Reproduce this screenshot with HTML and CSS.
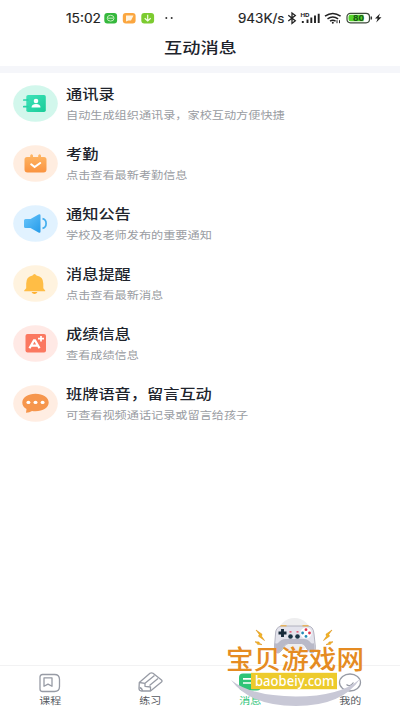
FILE: index.html
```html
<!DOCTYPE html>
<html lang="zh-CN">
<head>
<meta charset="utf-8">
<title>互动消息</title>
<link rel="stylesheet" href="styles.css">
</head>
<body>
<div class="app">
  <header class="status">
    <svg width="400" height="36" viewBox="0 0 400 36">
      <text class="status-text" x="66" y="22.5" textLength="35" lengthAdjust="spacingAndGlyphs">15:02</text>
      <rect x="104.300" y="13" width="12.800" height="10.500" rx="3" fill="#35b83d"/>
      <ellipse cx="110.600" cy="18.200" rx="3.400" ry="2.900" fill="none" stroke="#c5f0bd"/>
      <path d="M108 18.200h5.200" stroke="#c5f0bd"/>
      <rect x="122.800" y="13" width="12.800" height="10.500" rx="3" fill="#fba63f"/>
      <path d="M126 15.500h7.500l-2.500 5h-2.500l-2.500 1z" fill="#fff3df"/>
      <rect x="141.300" y="13" width="12.800" height="10.500" rx="3" fill="#7ccb30"/>
      <path d="M147.700 14.800v6M144.700 18.300l3 2.700 3-2.700" fill="none" stroke="#f2ffe5" stroke-width="1.200"/>
      <circle cx="166.300" cy="18" r="1" fill="#333"/><circle cx="171.700" cy="18" r="1" fill="#333"/>
      <text class="status-text" x="238" y="22.500" textLength="46.500" lengthAdjust="spacingAndGlyphs">943K/s</text>
      <path d="M288.300 15.300l7 5.500-3.300 2.600v-10.400l3.300 2.600-7 5.300" fill="none" stroke="#222" stroke-width="1.300"/>
      <text class="hd" x="300.500" y="17" textLength="9" lengthAdjust="spacingAndGlyphs">HD</text>
      <path d="M302.800 21v2M307.500 19.500v3.500M311.300 17.500v5.500M315 15.500v7.500M318.700 13.800v9.200" stroke="#222" stroke-width="1.900"/>
      <g fill="none" stroke="#222" stroke-width="1.500">
        <path d="M325 16.200q7.800-5.500 15.600 0M327.500 18.800q5.300-3.500 10.600 0M330 21.200q2.800-1.800 5.600 0"/>
      </g>
      <circle cx="332.800" cy="22.700" r="1" fill="#222"/>
      <path d="M337 20.200v3M339.500 20.200v3" stroke="#222"/>
      <rect x="347" y="13.300" width="22.500" height="9.500" rx="3.500" fill="#fff" stroke="#3d4a3b" stroke-width="1.200"/>
      <path d="M350.500 14.800h13v6.500h-13q-2 0-2-2v-2.500q0-2 2-2z" fill="#55d42a"/>
      <text class="charge" x="353" y="21.100" textLength="11" lengthAdjust="spacingAndGlyphs">80</text>
      <path d="M371.300 16.500v3" stroke="#333" stroke-width="1.500"/>
      <path d="M380 13.500l-5 5h2.700l-1.500 4 5.300-5.200h-2.800z" fill="#222"/>
    </svg>
  </header>
  <h1 class="title"><span class="wide">互动消息</span></h1>
  <div class="band"></div>

  <main class="list">
    <div class="row">
      <svg class="icon" viewBox="0 0 45 37">
        <defs>
          <linearGradient id="g1" x2="1" y2="1"><stop stop-color="#40e3ba"/><stop offset="1" stop-color="#19cc98"/></linearGradient>
          <linearGradient id="g2" x2="0" y2="1"><stop stop-color="#ffb765"/><stop offset="1" stop-color="#fa9340"/></linearGradient>
          <linearGradient id="g3" x2="1" y2="1"><stop stop-color="#69c5fb"/><stop offset="1" stop-color="#259be9"/></linearGradient>
        </defs>
        <ellipse cx="22.500" cy="18.500" rx="22.300" ry="18.300" fill="#d2f7ec"/>
        <rect x="13.300" y="10" width="19.500" height="17" rx="1.800" fill="url(#g1)"/>
        <path d="M10.800 15h4M10.800 21.700h4" stroke="#27d3a6" stroke-width="1.700" stroke-linecap="round"/>
        <circle cx="23" cy="16" r="2.300" fill="#fff"/>
        <path d="M18.500 22.600q0-3.500 4.500-3.500t4.500 3.500z" fill="#fff"/>
      </svg>
      <div class="copy"><div class="name wide">通讯录</div><div class="desc wide">自动生成组织通讯录，家校互动方便快捷</div></div>
    </div>
    <div class="row">
      <svg class="icon" viewBox="0 0 45 37">
        <ellipse cx="22.500" cy="18.500" rx="22.300" ry="18.300" fill="#ffede0"/>
        <path d="M14 12h3.200v-1.500q1.400-2.300 2.800 0v1.500h5.200v-1.500q1.400-2.300 2.800 0v1.500h3q2.500 0 2.500 2.500v10q0 3-3 3h-16q-3 0-3-3v-10q0-2.500 2.500-2.500z" fill="url(#g2)"/>
        <path d="M18.200 19.300l3.400 2.700 5.600-4" fill="none" stroke="#fff" stroke-width="2.100" stroke-linecap="round"/>
      </svg>
      <div class="copy"><div class="name wide">考勤</div><div class="desc wide">点击查看最新考勤信息</div></div>
    </div>
    <div class="row">
      <svg class="icon" viewBox="0 0 45 37">
        <ellipse cx="22.500" cy="18.500" rx="22.300" ry="18.300" fill="#e1f2ff"/>
        <path d="M12.500 14h5l8-4.500q2-1 2 1v16q0 2-2 1l-8-4.500h-5q-1.500 0-1.500-1.500v-6q0-1.500 1.500-1.500z" fill="url(#g3)"/>
        <path d="M29.500 13.700q3.600.8 3.600 4.800t-3.600 4.800" fill="none" stroke="#43aeee" stroke-width="1.700"/>
      </svg>
      <div class="copy"><div class="name wide">通知公告</div><div class="desc wide">学校及老师发布的重要通知</div></div>
    </div>
    <div class="row">
      <svg class="icon" viewBox="0 0 45 37">
        <ellipse cx="22.500" cy="18.500" rx="22.300" ry="18.300" fill="#fff3df"/>
        <path d="M19.500 10.500q2-3.200 4 0q6.800 1 6.800 8v4.800l1.900 2.200v.8h-21v-.8l2-2.200v-4.800q0-7 6.300-8z" fill="#ffbd45"/>
        <path d="M18.500 27h6q-1.200 1.900-3 1.900t-3-1.900z" fill="#ffb02f"/>
      </svg>
      <div class="copy"><div class="name wide">消息提醒</div><div class="desc wide">点击查看最新消息</div></div>
    </div>
    <div class="row">
      <svg class="icon" viewBox="0 0 45 37">
        <ellipse cx="22.500" cy="18.500" rx="22.300" ry="18.300" fill="#ffe9e5"/>
        <rect x="12.500" y="9" width="20.500" height="18.500" rx="2" fill="#fb7860"/>
        <path d="M16.500 23.300l4.500-8h1l4.500 8M18.500 20.700h6" fill="none" stroke="#fff" stroke-width="2.300"/>
        <path d="M28 11v5.400M25 13.700h6" stroke="#fff" stroke-width="1.700"/>
      </svg>
      <div class="copy"><div class="name wide">成绩信息</div><div class="desc wide">查看成绩信息</div></div>
    </div>
    <div class="row">
      <svg class="icon" viewBox="0 0 45 37">
        <ellipse cx="22.500" cy="18.500" rx="22.300" ry="18.300" fill="#ffede2"/>
        <path d="M22.500 8.800c7.600 0 13.200 3.700 13.200 8.800s-5.600 8.700-13.200 8.700q-2 0-3.500-.3-2.500 1.800-6 1.700l.5-3.600q-4.200-2.400-4.200-6.500c0-5.100 5.600-8.800 13.200-8.800z" fill="#f6964d"/>
        <g fill="#fff"><ellipse cx="15.400" cy="17.400" rx="2" ry="1.700"/><ellipse cx="22.500" cy="17.400" rx="2" ry="1.700"/><ellipse cx="29.600" cy="17.400" rx="2" ry="1.700"/></g>
      </svg>
      <div class="copy"><div class="name wide">班牌语音，留言互动</div><div class="desc wide">可查看视频通话记录或留言给孩子</div></div>
    </div>
  </main>

  <nav class="tabs">
    <div class="tab">
      <svg class="tab-icon" viewBox="0 0 26 22">
        <path d="M5.500 2.500h12q5 0 5 5v7q0 5-5 5h-12q-2.500 0-2.500-2.500v-12q0-2.500 2.500-2.500z"/>
        <path d="M7 5.800h8v8.500l-4-2.200-4 2.200z"/>
      </svg>
      <span class="wide">课程</span>
    </div>
    <div class="tab">
      <svg class="tab-icon" viewBox="0 0 26 22">
        <path d="M2.300 10.500L13 1.300q1.500-1 3 0L24.500 8q1 1 0 2L13.500 19H4.500q-2.500 0-2.500-2.500z"/>
        <path d="M2.300 10.500L8 11.300v3l5.500.7V19M8 11.300L17.500 3.500M12.500 13.500L21 6.500M2.500 15.500q2.500.5 3 3.500"/>
      </svg>
      <span class="wide">练习</span>
    </div>
    <div class="tab tab-active">
      <svg class="tab-icon" viewBox="0 0 26 22">
        <rect class="solid" x="2" y="1.500" width="22" height="17" rx="4"/>
        <path class="lines" d="M6 6.800h12M6 11h9"/>
      </svg>
      <span class="wide">消息</span>
    </div>
    <div class="tab">
      <svg class="tab-icon" viewBox="0 0 26 22">
        <ellipse cx="13" cy="10.500" rx="10.500" ry="8.500"/>
        <path d="M9.500 12.500q3.500 3 7-2"/>
      </svg>
      <span class="wide">我的</span>
    </div>
  </nav>

  <svg class="mark" viewBox="220 610 150 101">
    <circle cx="294.500" cy="635" r="17" fill="#eeeeef"/>
    <path d="M275.500 634q0-7 6-8h26q6 0 6.500 8l1.300 12q.5 7-3.300 7-3 0-6.500-7-1.500-2.500-4-2.500h-13q-2.500 0-4 2.500-4 7-6.500 7-3.800 0-3.500-7z" fill="#e3e3ec" stroke="#a4a4b4" stroke-width=".8"/>
    <path d="M275 643q1 1 3 0q3.500-4 7-4h19q4 0 7 4q2 1 3 0l.5 3q.5 7-3 7-3 0-6.500-7-1.500-2.500-4-2.500h-13q-2.500 0-4 2.500-4 7-6.500 7-3.800 0-3.200-7z" fill="#b9b9c8"/>
    <path d="M280.500 625.800h6M302.500 625.800h6" stroke="#e6b461" stroke-width="1.600"/>
    <path d="M282.500 629v8M278.500 633h8" stroke="#182b3a" stroke-width="2.900"/>
    <g fill="#193344"><circle cx="290.500" cy="636.500" r="2.300"/><circle cx="297.500" cy="636.500" r="2.300"/></g>
    <path d="M289.500 631.800h2M296.500 631.800h2" stroke="#e33b58" stroke-width="1.300"/>
    <circle cx="306" cy="633" r="5.600" fill="#fff"/>
    <g fill="#df3450"><circle cx="306" cy="629.700" r="1.400"/><circle cx="309.500" cy="633" r="1.400"/></g>
    <g fill="#268bb7"><circle cx="302.600" cy="633" r="1.400"/><circle cx="306" cy="636.400" r="1.400"/></g>
    <g fill="#f4b51f" stroke="#dc9420" stroke-width=".6">
      <path d="M256 630l6 4.200-.5 2 3 4.300-6-4.300.8-1.800zM255 641.800l4 .2.500 1.400 2.500 1.200-4.500-.3-.5-1.200z"/>
      <path d="M332 630l-6 4.200.5 2-3 4.300 6-4.300-.8-1.800zM333 641.800l-4 .2-.5 1.400-2.500 1.200 4.500-.3.500-1.200z"/>
    </g>
    <text class="mark-name" x="226" y="669" textLength="138" lengthAdjust="spacingAndGlyphs">宝贝游戏网</text>
    <path d="M231 680Q250 706 296 706T360 679Q340 696.500 296 696.500T231 680z" fill="#c8c8d6"/>
    <rect x="251" y="672.800" width="86" height="16.400" fill="#edcb2c"/>
    <text class="mark-url" x="255" y="685.700" textLength="79.500" lengthAdjust="spacingAndGlyphs">baobeiy.com</text>
  </svg>
</div>
</body>
</html>
```

FILE: styles.css
```css
* { box-sizing: border-box; }
body {
  margin: 0;
  background: #fff;
  font-family: "Noto Sans CJK SC", sans-serif;
}
.app {
  position: relative;
  display: flex;
  flex-direction: column;
  width: 400px;
  height: 711px;
  overflow: hidden;
}
.status { height: 35px; }
.status svg { display: block; }
.status-text { font: 400 12.5px Inter, sans-serif; fill: #222; stroke: #222; stroke-width: .15px; }
.hd { font: 700 5px Inter, sans-serif; fill: #222; }
.charge { font: 800 7.5px Inter, sans-serif; fill: #175d14; }
/* Glyphs are set wider than tall throughout the interface. */
.wide {
  display: block;
  width: max-content;
  transform: scaleX(1.2);
  transform-origin: left center;
  white-space: nowrap;
}
.title {
  display: flex;
  justify-content: center;
  height: 31px;
  margin: 0;
  font-size: 15.2px;
  font-weight: 500;
  line-height: 22px;
  color: #20242c;
}
.title .wide, .tab .wide { transform-origin: center; }
.band { height: 7px; background: #f5f6fa; }
.list { flex: 1; padding: 11.500px 12.500px 0; }
.row { display: flex; gap: 8px; height: 60.200px; }
.icon { width: 45px; height: 37px; flex: none; }
.copy { padding-top: 0; }
.name {
  height: 19px;
  font-size: 13.500px;
  font-weight: 500;
  line-height: 16px;
  color: #20242c;
}
.desc {
  height: 20px;
  font-size: 10.150px;
  line-height: 21px;
  color: #999ca2;
}
.tabs {
  display: grid;
  grid-template-columns: repeat(4, 1fr);
  height: 46px;
  border-top: 1px solid #f2f2f3;
}
.tab {
  display: flex;
  flex-direction: column;
  align-items: center;
  padding-top: 6px;
  font-size: 9.200px;
  line-height: 13px;
  color: #555960;
}
.tab-icon {
  width: 26px;
  height: 22px;
  fill: none;
  stroke: #979ba5;
  stroke-width: 1.300;
  stroke-linejoin: round;
}
.tab-active { color: #2fc477; }
.solid { fill: #2fc477; stroke: none; }
.lines { stroke: #fff; stroke-width: 1.700; }
.mark {
  position: absolute;
  left: 220px;
  top: 610px;
  width: 150px;
  height: 101px;
}
.mark-name { font: 500 26px "Noto Sans CJK SC", sans-serif; fill: #e58b22; }
.mark-url { font: 500 14.5px "Noto Sans", sans-serif; fill: #fff; }
```
